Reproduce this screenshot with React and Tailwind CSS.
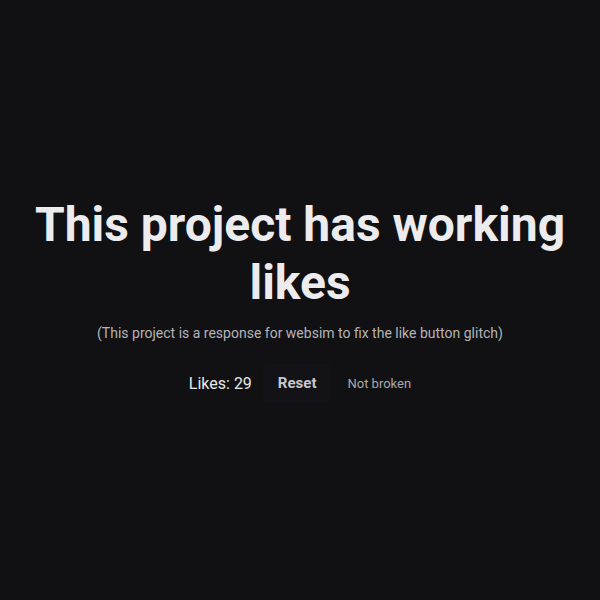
import React, { useState } from 'react';

export default function App() {
  const [likes, setLikes] = useState(29);

  return (
    <div
      className="min-h-screen w-full bg-[#111114] flex flex-col items-center justify-center text-center px-6"
      style={{ fontFamily: 'Roboto, "Liberation Sans", sans-serif' }}
    >
      <h1 className="text-[48px] leading-[1.2] font-bold text-[#ececee]">
        This project has working likes
      </h1>
      <p className="mt-[12px] text-[14px] text-[#b4b4b8]">
        (This project is a response for websim to fix the like button glitch)
      </p>
      <div className="mt-[20px] mb-[1px] flex items-center">
        <span className="pl-[16px] pr-[11px] text-[16px] text-[#e8e8ea]">Likes: {likes}</span>
        <button
          onClick={() => setLikes(0)}
          className="px-[15px] h-[39px] rounded bg-[#131317] text-[15px] font-bold text-[#c8c8cc]"
        >
          Reset
        </button>
        <button
          onClick={() => setLikes(likes + 1)}
          className="px-[16px] h-[39px] rounded bg-[#111114] text-[13px] text-[#a8a8ac]"
        >
          Not broken
        </button>
      </div>
    </div>
  );
}
